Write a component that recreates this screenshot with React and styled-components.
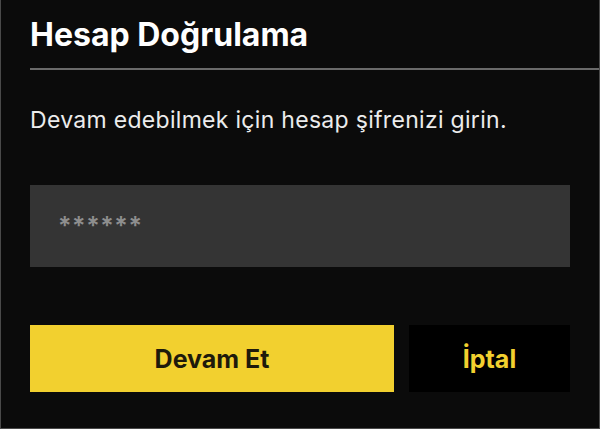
import React from 'react';
import styled, { createGlobalStyle } from 'styled-components';

const GlobalStyle = createGlobalStyle`
  html, body {
    margin: 0;
    padding: 0;
    background: #0b0b0b;
  }
  * {
    box-sizing: border-box;
  }
`;

const Panel = styled.div`
  width: 600px;
  height: 429px;
  background: #0b0b0b;
  border: 1px solid #4a4a4a;
  border-top: none;
  font-family: Inter, 'Noto Sans', sans-serif;
  display: flex;
  flex-direction: column;
`;

const Header = styled.div`
  margin-left: 29px;
  padding-top: 15px;
  padding-bottom: 13px;
  border-bottom: 2px solid #6a6a6a;
`;

const Title = styled.h1`
  margin: 0;
  font-size: 32px;
  font-weight: 700;
  color: #ffffff;
  line-height: 40px;
`;

const Body = styled.div`
  padding: 0 29px;
  display: flex;
  flex-direction: column;
`;

const Description = styled.p`
  margin: 36px 0 0;
  font-size: 23px;
  letter-spacing: 0.3px;
  color: #ececec;
  line-height: 28px;
`;

const PasswordInput = styled.input`
  margin-top: 51px;
  height: 82px;
  width: 100%;
  background: #343434;
  border: none;
  outline: none;
  padding: 0 28px;
  font-family: inherit;
  font-size: 25px;
  font-weight: 600;
  color: #ddd;

  &::placeholder {
    color: #8e8e8e;
    letter-spacing: 0.6px;
  }
`;

const Actions = styled.div`
  margin-top: 58px;
  display: flex;
  gap: 15px;
`;

const Button = styled.button`
  height: 67px;
  border: none;
  font-family: inherit;
  font-size: 25px;
  font-weight: 700;
  cursor: pointer;
  flex: ${(p) => (p.$primary ? '0 0 364px' : '1')};
  background: ${(p) => (p.$primary ? '#f2d02f' : '#000000')};
  color: ${(p) => (p.$primary ? '#1e1a0b' : '#f2d02f')};
`;

export default function App() {
  return (
    <>
      <GlobalStyle />
      <Panel>
        <Header>
          <Title>Hesap Doğrulama</Title>
        </Header>
        <Body>
          <Description>Devam edebilmek için hesap şifrenizi girin.</Description>
          <PasswordInput type="password" placeholder="******" />
          <Actions>
            <Button $primary>Devam Et</Button>
            <Button>İptal</Button>
          </Actions>
        </Body>
      </Panel>
    </>
  );
}
